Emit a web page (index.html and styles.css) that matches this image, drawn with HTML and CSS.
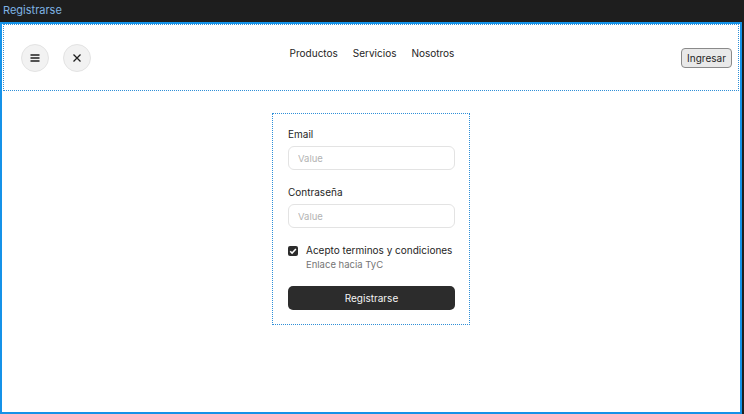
FILE: index.html
```html
<!DOCTYPE html>
<html lang="es">
<head>
<meta charset="utf-8">
<title>Registrarse</title>
<link rel="stylesheet" href="styles.css">
</head>
<body>
<div class="titlebar">Registrarse</div>
<div class="frame">
  <header class="header">
    <div class="icons">
      <button class="circle" aria-label="Menú">
        <svg width="12" height="12" viewBox="0 0 12 12"><path d="M1.5 3h9M1.5 6h9M1.5 9h9" stroke="#1e1e1e" stroke-width="1.3" fill="none"/></svg>
      </button>
      <button class="circle" aria-label="Cerrar">
        <svg width="12" height="12" viewBox="0 0 12 12"><path d="M2.5 2.5l7 7M9.5 2.5l-7 7" stroke="#1e1e1e" stroke-width="1.3" fill="none"/></svg>
      </button>
    </div>
    <nav class="nav">
      <a>Productos</a>
      <a>Servicios</a>
      <a>Nosotros</a>
    </nav>
    <button class="login">Ingresar</button>
  </header>
  <main class="main">
    <form class="card">
      <label class="field">
        <span class="label">Email</span>
        <input class="input" placeholder="Value">
      </label>
      <label class="field">
        <span class="label">Contraseña</span>
        <input class="input" type="password" placeholder="Value">
      </label>
      <div class="check">
        <span class="box">
          <svg width="10" height="10" viewBox="0 0 10 10"><path d="M2.2 5.2l1.9 1.9 3.8-4" stroke="#fff" stroke-width="1.5" fill="none"/></svg>
        </span>
        <div class="check-text">
          <span class="check-title">Acepto terminos y condiciones</span>
          <span class="check-desc">Enlace hacia TyC</span>
        </div>
      </div>
      <button type="button" class="submit">Registrarse</button>
    </form>
  </main>
</div>
</body>
</html>
```

FILE: styles.css
```css
* { box-sizing: border-box; }
html, body { margin: 0; padding: 0; }
body {
  width: 744px;
  height: 414px;
  background: #1e1e1e;
  font-family: Inter, "Noto Sans", sans-serif;
  overflow: hidden;
}
.titlebar {
  height: 22px;
  padding-left: 3px;
  line-height: 21px;
  font-size: 11px;
  color: #7fb3e3;
}
.frame {
  width: 742px;
  height: 392px;
  border: 2px solid #1592e8;
  background: #fff;
  display: flex;
  flex-direction: column;
}
.header {
  margin: 0 1px;
  height: 67px;
  border: 1px dotted #2f8fd8;
  display: flex;
  align-items: center;
  padding: 0 6px 0 17px;
}
.icons {
  display: flex;
  gap: 14px;
  margin-top: 1px;
}
.circle {
  width: 28px;
  height: 28px;
  border-radius: 50%;
  border: 1px solid #e3e3e3;
  background: #f2f2f2;
  display: flex;
  align-items: center;
  justify-content: center;
  padding: 0;
}
.nav {
  flex: 1;
  display: flex;
  justify-content: center;
  gap: 15px;
  align-self: flex-start;
  padding-top: 22px;
  padding-right: 28px;
  font-size: 10px;
  color: #1e1e1e;
}
.login {
  font-family: Inter, "Noto Sans", sans-serif;
  font-size: 10px;
  color: #1e1e1e;
  background: #e9e9e9;
  border: 1px solid #8a8a8a;
  border-radius: 4px;
  height: 20px;
  width: 51px;
  padding: 0;
  margin-top: 0;
}
.main {
  flex: 1;
  display: flex;
  justify-content: center;
  align-items: flex-start;
  padding-top: 22px;
}
.card {
  width: 198px;
  border: 1px dotted #2f8fd8;
  padding: 14px 14px 14px 15px;
  display: flex;
  flex-direction: column;
}
.field {
  display: flex;
  flex-direction: column;
  gap: 5px;
  margin-bottom: 16px;
}
.label {
  font-size: 10px;
  color: #1e1e1e;
  line-height: 13px;
}
.input {
  height: 24px;
  border: 1px solid #e3e3e3;
  border-radius: 6px;
  padding: 0 9px;
  font-family: Inter, "Noto Sans", sans-serif;
  font-size: 9.5px;
  color: #1e1e1e;
}
.input::placeholder { color: #b3b3b3; }
.check {
  display: flex;
  gap: 8px;
  margin-bottom: 15px;
}
.box {
  width: 10px;
  height: 10px;
  margin-top: 2px;
  border-radius: 2px;
  background: #2c2c2c;
  display: flex;
  align-items: center;
  justify-content: center;
}
.check-text {
  display: flex;
  flex-direction: column;
  gap: 1px;
}
.check-title {
  font-size: 10px;
  color: #1e1e1e;
  line-height: 13px;
}
.check-desc {
  font-size: 9.5px;
  color: #757575;
  line-height: 13px;
}
.submit {
  height: 24px;
  border: none;
  border-radius: 5px;
  background: #2c2c2c;
  color: #f5f5f5;
  font-family: Inter, "Noto Sans", sans-serif;
  font-size: 10px;
}
```
